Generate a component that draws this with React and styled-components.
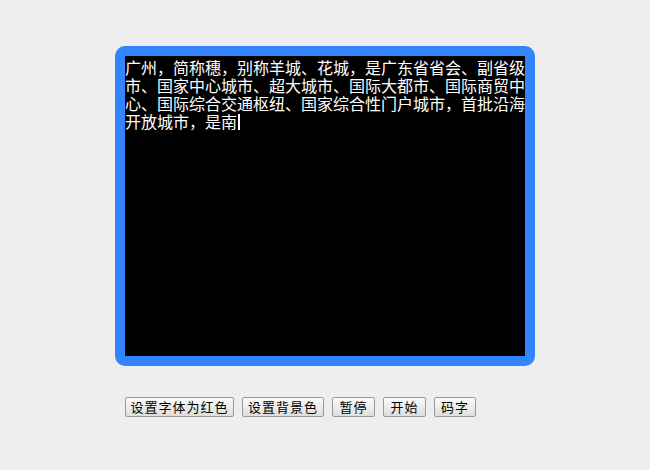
import React from 'react';
import styled, { createGlobalStyle } from 'styled-components';

const GlobalStyle = createGlobalStyle`
  html, body {
    margin: 0;
    padding: 0;
    background: #eeeeee;
  }
`

const text =
  '广州，简称穗，别称羊城、花城，是广东省省会、副省级' +
  '市、国家中心城市、超大城市、国际大都市、国际商贸中' +
  '心、国际综合交通枢纽、国家综合性门户城市，首批沿海' +
  '开放城市，是南';

const buttons = [
  { label: '设置字体为红色', width: 109 },
  { label: '设置背景色', width: 82 },
  { label: '暂停', width: 43 },
  { label: '开始', width: 43 },
  { label: '码字', width: 42 },
];

export default function App() {
  return (
    <Page>
      <GlobalStyle/>
      <Screen>
        <Typed>
          {text}
          <Cursor/>
        </Typed>
      </Screen>
      <Toolbar>
        {buttons.map((b) => (
          <Button key={b.label} $width={b.width}>{b.label}</Button>
        ))}
      </Toolbar>
    </Page>
  )
}

const Page = styled.div`
  width: 650px;
  height: 470px;
  padding: 46px 0 0 115px;
  box-sizing: border-box;
  font-family: "Noto Sans CJK SC", sans-serif;
`

const Screen = styled.div`
  width: 400px;
  height: 300px;
  border: 10px solid #3385ff;
  border-radius: 10px;
  background: #000;
`

const Typed = styled.div`
  color: #fff;
  font-size: 16px;
  line-height: 18px;
  padding-top: 2px;
  word-break: break-all;
  font-family: "Noto Sans CJK SC", "Liberation Sans", sans-serif;
`

const Cursor = styled.span`
  display: inline-block;
  width: 2px;
  height: 16px;
  margin-left: 1px;
  background: #fff;
  vertical-align: -2px;
`

const Toolbar = styled.div`
  display: flex;
  gap: 8px;
  margin: 31px 0 0 10px;
`

const Button = styled.button`
  width: ${(p) => p.$width}px;
  height: 20px;
  padding: 0;
  border: 1px solid #999;
  border-radius: 2px;
  background: linear-gradient(#fbfbfb, #dedede);
  color: #000;
  font-size: 13px;
  letter-spacing: 1px;
  font-family: "Noto Sans CJK SC", sans-serif;
  line-height: 18px;
`
